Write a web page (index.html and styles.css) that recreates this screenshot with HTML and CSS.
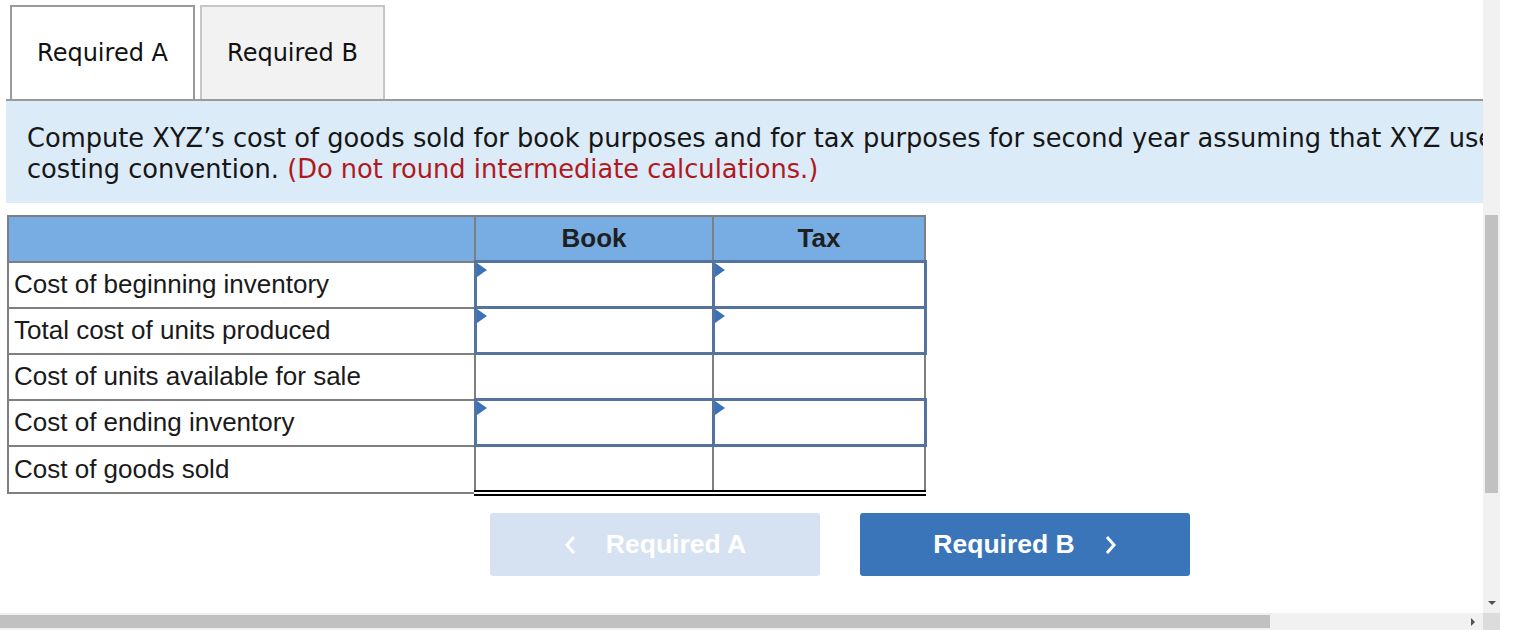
FILE: index.html
```html
<!DOCTYPE html>
<html lang="en">
<head>
    <meta charset="UTF-8">
    <title>Required A</title>
    <link rel="stylesheet" href="styles.css">
</head>
<body>
    <div class="frame">
        <div class="viewport">
            <div class="page">
                <div class="tabs">
                    <div class="tab active">Required A</div>
                    <div class="tab">Required B</div>
                </div>

                <div class="prompt">
                    Compute XYZ’s cost of goods sold for book purposes and for tax purposes for second year assuming that XYZ uses a FIFO inventory<br>
                    costing convention. <span class="note">(Do not round intermediate calculations.)</span>
                </div>

                <table class="sheet">
                    <tr class="head">
                        <th class="label-col"></th>
                        <th>Book</th>
                        <th>Tax</th>
                    </tr>
                    <tr>
                        <td class="label">Cost of beginning inventory</td>
                        <td class="entry"><div class="mark"></div></td>
                        <td class="entry"><div class="mark"></div></td>
                    </tr>
                    <tr>
                        <td class="label">Total cost of units produced</td>
                        <td class="entry"><div class="mark"></div></td>
                        <td class="entry"><div class="mark"></div></td>
                    </tr>
                    <tr>
                        <td class="label">Cost of units available for sale</td>
                        <td class="calc"></td>
                        <td class="calc"></td>
                    </tr>
                    <tr>
                        <td class="label">Cost of ending inventory</td>
                        <td class="entry"><div class="mark"></div></td>
                        <td class="entry"><div class="mark"></div></td>
                    </tr>
                    <tr>
                        <td class="label">Cost of goods sold</td>
                        <td class="calc total"></td>
                        <td class="calc total"></td>
                    </tr>
                </table>

                <div class="nav-buttons">
                    <button class="step disabled">
                        <svg width="12" height="20" viewBox="0 0 12 20"><polyline points="10,2 3,10 10,18" fill="none" stroke="#fff" stroke-width="3"/></svg>
                        <span>Required A</span>
                    </button>
                    <button class="step">
                        <span>Required B</span>
                        <svg width="12" height="20" viewBox="0 0 12 20"><polyline points="2,2 9,10 2,18" fill="none" stroke="#fff" stroke-width="3"/></svg>
                    </button>
                </div>
            </div>
        </div>
        <div class="vscroll">
            <div class="vthumb"></div>
            <div class="arrow-down"></div>
        </div>
        <div class="hscroll">
            <div class="hthumb"></div>
            <div class="arrow-right"></div>
        </div>
        <div class="corner"></div>
    </div>
</body>
</html>
```

FILE: styles.css
```css
body {
    margin: 0;
    background: #fff;
    font-family: "DejaVu Sans", Verdana, sans-serif;
}
.frame {
    display: grid;
    grid-template-columns: 1483px 17px;
    grid-template-rows: 613px 17px;
    width: 1500px;
}
.viewport {
    overflow: hidden;
}
.page {
    width: 1674px;
    padding: 5px 0 0 6px;
    box-sizing: border-box;
}
.tabs {
    display: flex;
    gap: 5px;
    padding-left: 4px;
    border-bottom: 2px solid #9a9a9a;
}
.tab {
    width: 185px;
    height: 94px;
    box-sizing: border-box;
    border: 2px solid #c6c6c6;
    border-bottom: none;
    background: #f2f2f2;
    display: flex;
    align-items: center;
    justify-content: center;
    font-size: 24px;
    color: #111;
}
.tab.active {
    background: #fff;
    border-color: #9a9a9a;
}
.prompt {
    background: #dcebf8;
    padding: 22px 0 18px 21px;
    font-size: 25.7px;
    line-height: 31px;
    color: #161616;
    white-space: nowrap;
}
.note {
    color: #b0191e;
}
.sheet {
    margin-top: 12px;
    margin-left: 1px;
    border-collapse: collapse;
    font-family: "Liberation Sans", Arial, sans-serif;
    font-size: 26px;
}
.sheet th, .sheet td {
    border: 2px solid #7f7f7f;
    padding: 0;
    height: 43px;
}
.sheet .head th {
    background: #78ade4;
    font-weight: bold;
    color: #1f1f1f;
    height: 43px;
    width: 236px;
}
.sheet .head th:last-child {
    width: 210px;
}
.sheet .head .label-col {
    width: 465px;
}
.sheet .label {
    padding: 0 0 0 5px;
    color: #1a1a1a;
    vertical-align: middle;
}
.sheet .entry {
    border: 3px solid #55749d;
    position: relative;
    background: #fff;
}
.mark {
    position: absolute;
    left: 0;
    top: 0;
    width: 0;
    height: 0;
    border-top: 7px solid transparent;
    border-bottom: 7px solid transparent;
    border-left: 10px solid #3c73b8;
}
.sheet .calc {
    border-top: 2px solid #000;
}
.sheet .calc.total {
    border-bottom: 6px double #000;
}
.nav-buttons {
    display: flex;
    justify-content: center;
    gap: 40px;
    margin-top: 17px;
}
.step {
    width: 330px;
    height: 63px;
    border: none;
    border-radius: 3px;
    background: #3a75ba;
    color: #fff;
    font-family: "Liberation Sans", Arial, sans-serif;
    font-weight: bold;
    font-size: 26.5px;
    display: flex;
    align-items: center;
    justify-content: center;
    gap: 30px;
    padding: 0;
}
.step.disabled {
    background: #d6e2f1;
}
.vscroll {
    background: #f1f1f1;
    position: relative;
}
.vthumb {
    position: absolute;
    left: 2px;
    top: 215px;
    width: 13px;
    height: 278px;
    background: #c1c1c1;
}
.arrow-down {
    position: absolute;
    left: 5px;
    top: 601px;
    border-left: 4px solid transparent;
    border-right: 4px solid transparent;
    border-top: 4px solid #505050;
}
.hscroll {
    background: #f1f1f1;
    position: relative;
}
.hthumb {
    position: absolute;
    left: 0;
    top: 2px;
    width: 1270px;
    height: 13px;
    background: #c1c1c1;
}
.arrow-right {
    position: absolute;
    left: 1471px;
    top: 5px;
    border-top: 4px solid transparent;
    border-bottom: 4px solid transparent;
    border-left: 4px solid #505050;
}
.corner {
    background: #dcdcdc;
}
```
